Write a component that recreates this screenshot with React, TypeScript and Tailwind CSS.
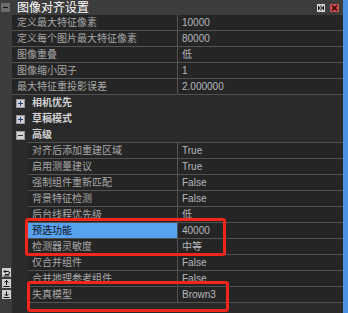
import React from 'react';

type Prop = { label: string; value: string; selected?: boolean };

const topRows: Prop[] = [
  { label: '定义最大特征像素', value: '10000' },
  { label: '定义每个图片最大特征像素', value: '80000' },
  { label: '图像重叠', value: '低' },
  { label: '图像缩小因子', value: '1' },
  { label: '最大特征重投影误差', value: '2.000000' },
];

const advRows: Prop[] = [
  { label: '对齐后添加重建区域', value: 'True' },
  { label: '启用测量建议', value: 'True' },
  { label: '强制组件重新匹配', value: 'False' },
  { label: '背景特征检测', value: 'False' },
  { label: '后台线程优先级', value: '低' },
  { label: '预选功能', value: '40000', selected: true },
  { label: '检测器灵敏度', value: '中等' },
  { label: '仅合并组件', value: 'False' },
  { label: '合并地理参考组件', value: 'False' },
  { label: '失真模型', value: 'Brown3' },
];

const ExpandBox = ({ open }: { open?: boolean }) => (
  <div className="w-[9px] h-[9px] bg-[#d2d2d2] border border-[#9a9a9a] flex items-center justify-center">
    <svg width="7" height="7" viewBox="0 0 7 7">
      <rect x="1" y="3" width="5" height="1" fill={open ? '#333' : '#1e3c7a'} />
      {!open && <rect x="3" y="1" width="1" height="5" fill="#1e3c7a" />}
    </svg>
  </div>
);

const Category = ({ label, open }: { label: string; open?: boolean }) => (
  <div className="h-[16px] flex items-center pl-[4px]">
    <ExpandBox open={open} />
    <span className="ml-[7px] text-[10px] font-bold text-[#d2d2d2] leading-none">{label}</span>
  </div>
);

const GutterIcon = ({ d }: { d: string }) => (
  <div className="w-[9px] h-[9px] bg-[#cfcfcf] flex items-center justify-center">
    <svg width="9" height="9" viewBox="0 0 9 9" fill="none" stroke="#111" strokeWidth="1">
      <path d={d} />
    </svg>
  </div>
);

export default function App() {
  return (
    <div className="w-[348px] h-[313px] flex bg-[#2a2a2a] overflow-hidden relative font-['Liberation_Sans','Noto_Sans_CJK_SC',sans-serif]">
      <div className="flex-1 flex flex-col">
        {/* title bar */}
        <div className="h-[15px] bg-[#3c3c3c] flex items-center shrink-0">
          <div className="ml-px w-[9px] h-[9px] bg-[#6c6c6c] flex items-center justify-center">
            <div className="w-[5px] h-px bg-[#111]" />
          </div>
          <span className="ml-[7px] text-[12px] text-white leading-none">图像对齐设置</span>
          <div className="flex-1" />
          <div className="w-[8px] h-[8px] bg-[#d6d6d6] flex items-center justify-center">
            <svg width="8" height="8" viewBox="0 0 8 8" fill="#111">
              <path d="M1 1.5 L3.5 4 L1 6.5Z M7 1.5 L4.5 4 L7 6.5Z" />
              <rect x="3.6" y="1" width="0.8" height="6" />
            </svg>
          </div>
          <div className="ml-[5px] mr-[4px] w-[9px] h-[8px] bg-[#c84e4e] flex items-center justify-center">
            <svg width="7" height="6" viewBox="0 0 7 6" stroke="#2a0000" strokeWidth="1.4">
              <path d="M1 0.5 L6 5.5 M6 0.5 L1 5.5" />
            </svg>
          </div>
        </div>

        <div className="flex flex-1">
          {/* left gutter */}
          <div className="w-[12px] bg-[#3c3c3c] flex flex-col items-center justify-end gap-[2px] pb-[14px] pl-px">
            <GutterIcon d="M2 3.5 H6 Q7.5 3.5 7.5 5 Q7.5 6.5 6 6.5 H3 M3.5 2 L2 3.5 L3.5 5 M1.5 8 H7.5" />
            <GutterIcon d="M4.5 1.5 V6 M2.5 3.5 L4.5 1.5 L6.5 3.5 M1.5 7.5 H7.5" />
            <GutterIcon d="M4.5 1.5 V6 M2.5 4 L4.5 6 L6.5 4 M1.5 7.5 H7.5" />
          </div>

          {/* property grid */}
          <div className="flex-1 flex flex-col">
            {topRows.map((r) => (
              <div key={r.label} className="h-[16px] flex border-b border-[#525252] bg-[#252525]">
                <div className="w-[166px] border-r border-[#525252] pl-[5px] flex items-center text-[10px] text-[#a8a8a8] leading-none">
                  {r.label}
                </div>
                <div className="flex-1 pl-[4px] flex items-center text-[10px] text-[#b6b9bd] leading-none">{r.value}</div>
              </div>
            ))}
            <Category label="相机优先" />
            <Category label="草稿模式" />
            <div className="h-[15px]">
              <Category label="高级" open />
            </div>
            <div className="ml-[16px] flex flex-col">
              {advRows.map((r, i) => (
                <div
                  key={r.label}
                  className={`flex bg-[#252525] border-t border-[#525252] ${i === advRows.length - 1 ? 'h-[17px] border-b' : 'h-[16px]'}`}
                >
                  <div
                    className={`w-[150px] border-r border-[#525252] pl-[4px] flex items-center text-[10px] leading-none ${
                      r.selected ? 'bg-[#58a2f2] text-[#111]' : 'text-[#a8a8a8]'
                    }`}
                  >
                    {r.label}
                  </div>
                  <div className="flex-1 pl-[4px] flex items-center text-[10px] text-[#b6b9bd] leading-none">{r.value}</div>
                </div>
              ))}
            </div>
          </div>
        </div>
      </div>

      {/* scroll edge */}
      <div className="w-[5px] bg-[#4b91e4]" />

      {/* annotations */}
      <div className="absolute left-[25px] top-[218px] w-[201px] h-[38px] border-[3px] border-[#f2261c] rounded-[3px]" />
      <div className="absolute left-[27px] top-[281px] w-[202px] h-[31px] border-[3px] border-[#f2261c] rounded-[3px]" />
    </div>
  );
}
